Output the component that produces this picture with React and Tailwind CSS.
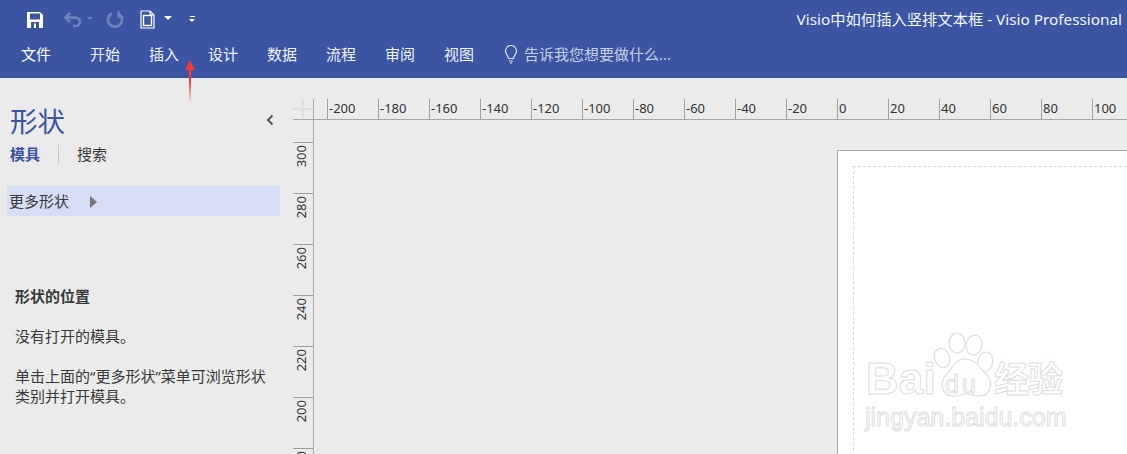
const FONT = "font-['Noto_Sans','Noto_Sans_CJK_SC',sans-serif]";

const menus = ["开始", "插入", "设计", "数据", "流程", "审阅", "视图"];
const hLabels = [-200, -180, -160, -140, -120, -100, -80, -60, -40, -20, 0, 20, 40, 60, 80, 100];
const vLabels = [300, 280, 260, 240, 220, 200, 180];

function QuickAccess() {
  return (
    <div className="flex h-[38px] items-center pl-[26px]">
      <svg width="18" height="18" viewBox="0 0 18 18" className="mt-px">
        <path d="M1 1h13l3 3v13H1z" fill="#fff" />
        <rect x="4" y="2.5" width="10" height="6" fill="#3b55a3" />
        <rect x="5" y="11" width="8" height="6" fill="#3b55a3" />
        <rect x="8" y="12.5" width="2" height="4.5" fill="#fff" />
      </svg>
      <svg width="22" height="18" viewBox="0 0 22 18" className="ml-[18px]" fill="none" stroke="#6f84bd" strokeWidth="2.5">
        <path d="M8 3L3.5 7.5 8 12" />
        <path d="M4 7.5h9c3 0 5 2 5 4.5s-2 4-4 4h-3" />
      </svg>
      <div className="mb-0.5 ml-[3px] h-0 w-0 border-x-[3px] border-t-[3px] border-x-transparent border-t-[#6f84bd]" />
      <svg width="18" height="18" viewBox="0 0 18 18" className="ml-[13px]" fill="none" stroke="#6f84bd" strokeWidth="2.6">
        <path d="M6 3.5a7 7 0 1 0 6 0" />
        <path d="M12.5 1v6h5" strokeWidth="2" />
      </svg>
      <svg width="16" height="19" viewBox="0 0 16 19" className="ml-[16px]" fill="none" stroke="#fff" strokeWidth="1.2">
        <path d="M1 1h9l4 4v13H1z" />
        <path d="M10 1v4h4" />
        <rect x="3.5" y="5.5" width="8" height="10" strokeWidth="1.4" />
      </svg>
      <div className="mb-0.5 ml-[8px] h-0 w-0 border-x-[4px] border-t-[4px] border-x-transparent border-t-white" />
      <div className="ml-[17px] flex flex-col items-center gap-[2px]">
        <div className="h-px w-[5px] bg-white" />
        <div className="h-0 w-0 border-x-[3px] border-t-[3px] border-x-transparent border-t-white" />
      </div>
    </div>
  );
}

function Ribbon() {
  return (
    <header className="relative h-[78px] shrink-0 bg-[#3b55a3] text-white">
      <div className="flex items-start justify-between">
        <QuickAccess />
        <div className="pr-[5px] pt-[8px] text-[15.3px] leading-[22px] text-[#f2f4fa]">
          Visio中如何插入竖排文本框 - Visio Professional
        </div>
      </div>
      <nav className="flex h-[34px] items-center pb-px pl-[21px] text-[15px]">
        <span className="mr-[39px] w-[30px]">文件</span>
        {menus.map((m) => (
          <span key={m} className="mr-[29px] w-[30px] text-[#f0f2f9]">
            {m}
          </span>
        ))}
        <svg width="16" height="19" viewBox="0 0 16 19" fill="none" stroke="#dfe4f2" strokeWidth="1.2">
          <path d="M5.5 13.5c0-2.5-3-4-3-7.5a5.5 5.5 0 0 1 11 0c0 3.500-3 5-3 7.500z" />
          <path d="M6 16h4M7 18h2" />
        </svg>
        <span className="ml-[5px] text-[#c6cee4]">告诉我您想要做什么...</span>
      </nav>
    </header>
  );
}

function Sidebar() {
  return (
    <aside className="flex w-[293px] shrink-0 flex-col text-[#3a3a3a]">
      <div className="flex h-[63px] items-end justify-between pl-[10px] pr-[19px]">
        <h1 className="text-[27.5px] leading-[38px] font-normal text-[#3b55a3]">形状</h1>
        <svg width="8" height="12" viewBox="0 0 8 12" fill="none" stroke="#555" strokeWidth="2" className="mb-[15px]">
          <path d="M6.500 1.500L2 6l4.500 4.500" />
        </svg>
      </div>
      <div className="mt-[3px] flex h-[20px] items-center pl-[10px] text-[15px]">
        <span className="font-bold text-[#3b55a3]">模具</span>
        <div className="ml-[18px] h-[19px] w-px bg-[#c6c6c6]" />
        <span className="ml-[18px]">搜索</span>
      </div>
      <div className="ml-[7px] mr-[13px] mt-[22px] flex h-[30px] items-center bg-[#d5def5] pl-[2px] text-[15px]">
        <span>更多形状</span>
        <div className="ml-[21px] mt-px h-0 w-0 border-y-[6px] border-l-[7px] border-y-transparent border-l-[#777]" />
      </div>
      <div className="mt-[70px] px-[15px] text-[15px] leading-[20px]">
        <p className="font-bold">形状的位置</p>
        <p className="mt-[20px]">没有打开的模具。</p>
        <p className="mt-[20px] w-[256px]">单击上面的“更多形状”菜单可浏览形状类别并打开模具。</p>
      </div>
    </aside>
  );
}

function Rulers() {
  return (
    <div className="flex h-[42px] shrink-0 border-b border-[#a8a8a8]">
      <div className="relative mt-[21px] w-[21px] shrink-0 border-r border-[#a8a8a8]">
        <div className="absolute left-0 top-[9px] h-[2px] w-[19px] bg-[#dedede]" />
        <div className="absolute left-[9px] top-0 h-[19px] w-[2px] bg-[#dedede]" />
      </div>
      <div className="ml-[13px] mt-[21px] flex overflow-hidden">
        {hLabels.map((n) => (
          <div key={n} className="w-[51px] shrink-0 border-l border-[#9f9f9f] pl-[1px] text-[13px] leading-[18px] text-[#333]">
            {n}
          </div>
        ))}
      </div>
    </div>
  );
}

function VerticalRuler() {
  return (
    <div className="w-[21px] shrink-0 border-r border-[#a8a8a8] pt-[22px]">
      {vLabels.map((n) => (
        <div key={n} className="flex h-[51px] w-full items-start justify-center border-t border-[#9f9f9f]">
          <span className="mr-[3px] mt-[2px] rotate-180 text-[13px] leading-[13px] text-[#333] [writing-mode:vertical-rl]">
            {n}
          </span>
        </div>
      ))}
    </div>
  );
}

function Watermark() {
  const outlined = "text-white [-webkit-text-stroke:1px_#dddddd]";
  return (
    <div className="absolute left-[862px] top-[333px] w-[215px] font-['Liberation_Sans','Noto_Sans_CJK_SC',sans-serif]">
      <div className="relative h-[70px]">
        <span className={`absolute left-[4px] top-[21px] text-[45px] leading-[50px] font-bold ${outlined}`}>Bai</span>
        <svg width="66" height="66" viewBox="0 0 66 66" fill="#fff" stroke="#dddddd" strokeWidth="1.200" className="absolute left-[69px] top-0">
          <ellipse cx="11" cy="25" rx="7.500" ry="10" transform="rotate(-20 11 25)" />
          <ellipse cx="26" cy="10" rx="8" ry="10" />
          <ellipse cx="43" cy="12" rx="8" ry="10" transform="rotate(12 43 12)" />
          <ellipse cx="54" cy="29" rx="7.500" ry="10" transform="rotate(15 54 29)" />
          <path d="M34 26c-10 0-13 10-19 16-6 5-6 22 9 21 6 0 8-2 11-2 4 0 8 2 13 2 13 0 14-15 8-21-7-6-11-16-22-16z" />
        </svg>
        <span className={`absolute left-[83px] top-[38px] text-[25px] leading-[26px] tracking-[3px] ${outlined}`}>du</span>
        <span className={`absolute left-[132px] top-[27px] text-[35px] leading-[40px] font-bold tracking-[-1px] ${outlined}`}>经验</span>
      </div>
      <div className={`-mt-[1px] ml-[3px] whitespace-nowrap text-[25px] leading-[30px] ${outlined}`}>jingyan.baidu.com</div>
    </div>
  );
}

function Canvas() {
  return (
    <main className="flex min-w-0 flex-1 flex-col">
      <Rulers />
      <div className="flex min-h-0 flex-1 overflow-hidden">
        <VerticalRuler />
        <div className="ml-[523px] mt-[30px] flex-1 border-l border-t border-[#a4a8b4] bg-white pl-[15px] pt-[15px]">
          <div className="h-[400px] border-l border-t border-dashed border-[#d8d8d8]" />
        </div>
      </div>
    </main>
  );
}

export default function App() {
  return (
    <div className={`relative flex h-[454px] w-[1127px] flex-col overflow-hidden bg-[#ebebeb] ${FONT}`}>
      <Ribbon />
      <div className="flex min-h-0 flex-1">
        <Sidebar />
        <Canvas />
      </div>
      <Watermark />
      {/* annotation arrow */}
      <svg width="12" height="44" viewBox="0 0 12 44" className="absolute left-[184px] top-[60px]">
        <path d="M6 0L11 10H7.500L6 43 4.500 10H1z" fill="#ee3b3b" />
      </svg>
    </div>
  );
}
